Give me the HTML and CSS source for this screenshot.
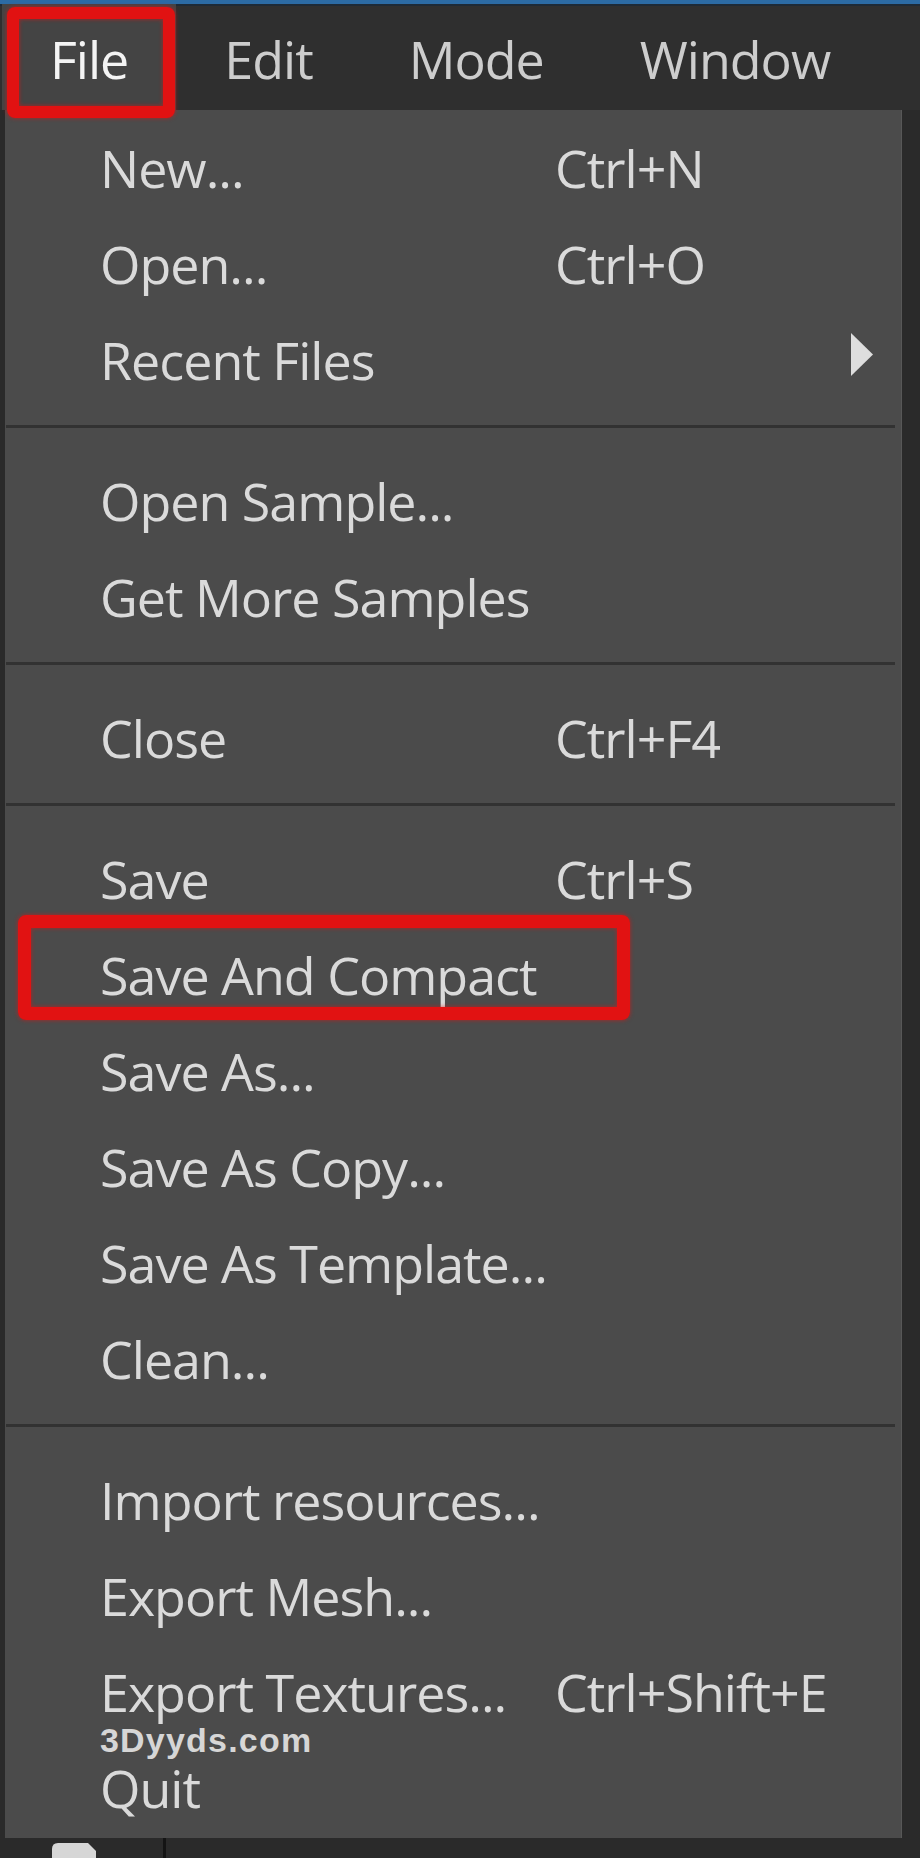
FILE: index.html
```html
<!DOCTYPE html>
<html lang="en">
<head>
<meta charset="utf-8">
<title>File menu</title>
<link rel="stylesheet" href="styles.css">
</head>
<body>
<header class="menubar">
  <div class="mb-item active">File<span class="mark mark-file"></span></div>
  <div class="mb-item">Edit</div>
  <div class="mb-item">Mode</div>
  <div class="mb-item">Window</div>
</header>
<div class="dropdown">
  <div class="row"><span class="label">New...</span><span class="key">Ctrl+N</span></div>
  <div class="row"><span class="label">Open...</span><span class="key">Ctrl+O</span></div>
  <div class="row"><span class="label">Recent Files</span><svg class="arrow" width="22" height="43" viewBox="0 0 22 43"><path d="M0 0 L22 21.5 L0 43 Z" fill="#dedede"/></svg></div>
  <div class="sep"></div>
  <div class="row"><span class="label">Open Sample...</span></div>
  <div class="row"><span class="label">Get More Samples</span></div>
  <div class="sep"></div>
  <div class="row"><span class="label">Close</span><span class="key">Ctrl+F4</span></div>
  <div class="sep"></div>
  <div class="row"><span class="label">Save</span><span class="key">Ctrl+S</span></div>
  <div class="row"><span class="label">Save And Compact</span><span class="mark mark-row"></span></div>
  <div class="row"><span class="label">Save As...</span></div>
  <div class="row"><span class="label">Save As Copy...</span></div>
  <div class="row"><span class="label">Save As Template...</span></div>
  <div class="row"><span class="label">Clean...</span></div>
  <div class="sep"></div>
  <div class="row"><span class="label">Import resources...</span></div>
  <div class="row"><span class="label">Export Mesh...</span></div>
  <div class="row"><span class="label">Export Textures...</span><span class="key">Ctrl+Shift+E</span></div>
  <div class="row"><span class="label">Quit</span></div>
</div>
<div class="strip">
  <svg class="strip-icon" width="48" height="15" viewBox="0 0 48 15"><path d="M6 0 H36 L44 8 V15 H0 V6 Q0 0 6 0 Z" fill="#d6d6d6"/></svg>
  <span class="vline"></span>
</div>
<div class="watermark">3Dyyds.com</div>
</body>
</html>
```

FILE: styles.css
```css
html, body {
  margin: 0;
  padding: 0;
}

body {
  width: 920px;
  height: 1858px;
  overflow: hidden;
  position: relative;
  background: #2a2a2a;
  font-family: "Open Sans", "Noto Sans", sans-serif;
}

.menubar {
  display: flex;
  align-items: stretch;
  height: 106px;
  border-top: 4px solid #2c6ba4;
  background: #2f2f2f;
  box-shadow: inset 0 2px 0 #1e2a36;
  padding-left: 2px;
  font-size: 52px;
  letter-spacing: -1px;
  color: #cdcdcd;
}

.mb-item {
  position: relative;
  display: flex;
  align-items: center;
  padding: 2px 48px 0;
  box-sizing: border-box;
}

.mb-item.active {
  background: #444444;
  color: #f4f4f4;
}

.mark {
  position: absolute;
  z-index: 3;
  border: 12px solid #e11212;
  border-radius: 8px;
  box-sizing: border-box;
  box-shadow: 0 0 4px rgba(225, 18, 18, 0.7), inset 0 0 4px rgba(225, 18, 18, 0.7);
  pointer-events: none;
}

.mark-file {
  left: 5px;
  top: 3px;
  width: 168px;
  height: 111px;
}

.dropdown {
  margin-left: 5px;
  width: 896px;
  background: #4b4b4b;
  padding: 9px 0 3px;
  box-shadow: 1px 0 0 #575757;
}

.row {
  position: relative;
  display: flex;
  align-items: center;
  height: 96px;
  padding-left: 95px;
  font-size: 52px;
  letter-spacing: -1px;
  color: #dadada;
}

.label {
  width: 455px;
  flex: none;
  white-space: nowrap;
}

.key {
  white-space: nowrap;
}

.arrow {
  margin-left: auto;
  margin-right: 28px;
  margin-top: -9px;
}

.mark-row {
  left: 13px;
  top: -11px;
  width: 612px;
  height: 105px;
  border-width: 13px;
}

.sep {
  height: 3px;
  margin: 18px 6px 24px 1px;
  background: #323232;
}

.strip {
  display: flex;
  align-items: flex-start;
  height: 20px;
  padding-left: 52px;
}

.strip-icon {
  margin-top: 5px;
}

.vline {
  width: 3px;
  height: 20px;
  margin-left: 63px;
  background: #141414;
}

.watermark {
  position: absolute;
  z-index: 2;
  left: 100px;
  top: 1723px;
  font-family: "Liberation Sans", Arial, sans-serif;
  font-weight: 700;
  font-size: 34px;
  line-height: 1;
  letter-spacing: 1.2px;
  color: #d6d6d6;
}
```
